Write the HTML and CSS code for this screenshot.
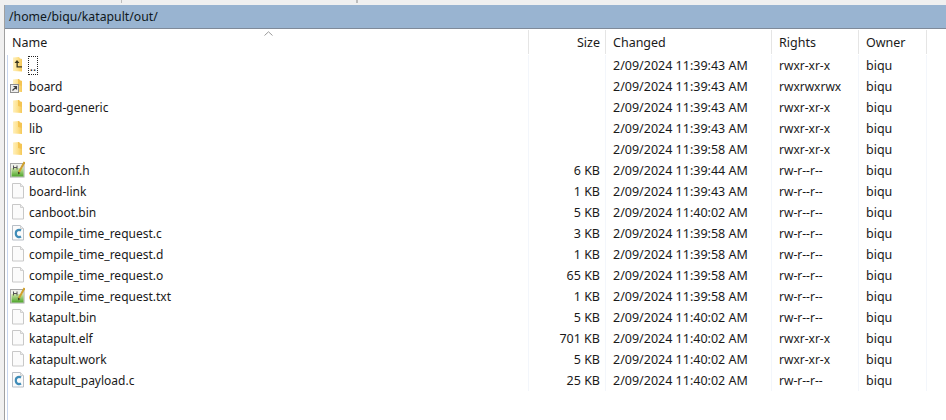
FILE: index.html
```html
<!DOCTYPE html>
<html lang="en">
<head>
<meta charset="utf-8">
<title>/home/biqu/katapult/out/</title>
<link rel="stylesheet" href="styles.css">
</head>
<body>
<svg class="defs" width="0" height="0" aria-hidden="true">
  <defs>
    <linearGradient id="fold" x1="0" x2="1" y1="0" y2="0">
      <stop offset="0" stop-color="#fff0bd"/>
      <stop offset="0.55" stop-color="#fde08a"/>
      <stop offset="1" stop-color="#f5c858"/>
    </linearGradient>
    <linearGradient id="green" x1="0" x2="0" y1="0" y2="1">
      <stop offset="0" stop-color="#cfe6a8"/>
      <stop offset="1" stop-color="#4ca52a"/>
    </linearGradient>
    <symbol id="folder" viewBox="0 0 16 19">
      <path d="M4 2.500L10 2l1 1.500L13 4v11l-9-.5z" fill="url(#fold)"/>
      <path d="M9 2l1 0 1 1.500L13 4v5l-4-1z" fill="#f4c453"/>
    </symbol>
    <symbol id="up" viewBox="0 0 16 19">
      <path d="M4 1.500L10 1l1 1.500 2 .5v12.500l-9-.5z" fill="url(#fold)"/>
      <path d="M8 4L5.500 7H7.500V11.500H13V10.300H8.800V7H10.500z" fill="#3d3820"/>
    </symbol>
    <symbol id="link" viewBox="0 0 16 19">
      <path d="M4 2.500L10 2l1 1.500L13 4v11l-9-.5z" fill="url(#fold)"/>
      <path d="M9 2l1 0 1 1.500L13 4v5l-4-1z" fill="#f4c453"/>
      <rect x="1.500" y="7.500" width="8" height="8" fill="#eee" stroke="#8d8d8d"/>
      <path d="M3.500 13.500L7 10M4.500 9.500H7.500V12.500" fill="none" stroke="#404040" stroke-width="1.200"/>
    </symbol>
    <symbol id="file" viewBox="0 0 16 19">
      <path d="M3.500 1.500h8l3 3v11.500h-11z" fill="#fbfbfb" stroke="#c8c8c8"/>
      <path d="M11.500 1.500v3h3" fill="#ececec" stroke="#d0d0d0"/>
    </symbol>
    <symbol id="cfile" viewBox="0 0 16 19">
      <path d="M3.500 1.500h8l3 3v11.500h-11z" fill="#fbfbfb" stroke="#b8bec6"/>
      <path d="M11.500 1.500v3h3" fill="#ececec" stroke="#d0d0d0"/>
      <path d="M12 6.500C10.500 5.500 6.800 5.500 6.800 9.500s3.700 4 5.200 3" fill="none" stroke="#3f8cb8" stroke-width="2.200"/>
    </symbol>
    <symbol id="text" viewBox="0 0 16 19">
      <rect x="1.500" y="2.500" width="13.500" height="13.500" fill="#eef0ea" stroke="#a8a8a8"/>
      <rect x="2.500" y="7" width="12" height="8.500" fill="url(#green)"/>
      <path d="M4.500 4.500v4M8 4.500v4M4.500 6.500H8" stroke="#555" fill="none"/>
      <path d="M10 11L15.500 1" stroke="#cfa02e" stroke-width="2" fill="none"/>
      <path d="M8.800 10.500l.5 3 2-1.500z" fill="#46401f"/>
    </symbol>
  </defs>
</svg>
<div class="strip"><span class="tick"></span><span class="tick tick-wide"></span></div>
<main class="panel">
  <div class="path">/home/biqu/katapult/out/</div>
  <div class="row head">
    <div class="c name">Name<span class="sort"><svg width="9" height="5" viewBox="0 0 9 5"><path d="M.5 4.500L4.500.8l4 3.700" fill="none" stroke="#9a9a9a"/></svg></span></div>
    <div class="c size">Size</div>
    <div class="c changed">Changed</div>
    <div class="c rights">Rights</div>
    <div class="c owner">Owner</div>
    <div class="c rest"></div>
  </div>
  <div class="list">
    <div class="row"><div class="c name"><svg class="ico"><use href="#up"/></svg><span class="focus">..</span></div><div class="c size"></div><div class="c changed">2/09/2024 11:39:43 AM</div><div class="c rights">rwxr-xr-x</div><div class="c owner">biqu</div><div class="c rest"></div></div>
    <div class="row"><div class="c name"><svg class="ico"><use href="#link"/></svg>board</div><div class="c size"></div><div class="c changed">2/09/2024 11:39:43 AM</div><div class="c rights">rwxrwxrwx</div><div class="c owner">biqu</div><div class="c rest"></div></div>
    <div class="row"><div class="c name"><svg class="ico"><use href="#folder"/></svg>board-generic</div><div class="c size"></div><div class="c changed">2/09/2024 11:39:43 AM</div><div class="c rights">rwxr-xr-x</div><div class="c owner">biqu</div><div class="c rest"></div></div>
    <div class="row"><div class="c name"><svg class="ico"><use href="#folder"/></svg>lib</div><div class="c size"></div><div class="c changed">2/09/2024 11:39:43 AM</div><div class="c rights">rwxr-xr-x</div><div class="c owner">biqu</div><div class="c rest"></div></div>
    <div class="row"><div class="c name"><svg class="ico"><use href="#folder"/></svg>src</div><div class="c size"></div><div class="c changed">2/09/2024 11:39:58 AM</div><div class="c rights">rwxr-xr-x</div><div class="c owner">biqu</div><div class="c rest"></div></div>
    <div class="row"><div class="c name"><svg class="ico"><use href="#text"/></svg>autoconf.h</div><div class="c size">6 KB</div><div class="c changed">2/09/2024 11:39:44 AM</div><div class="c rights">rw-r--r--</div><div class="c owner">biqu</div><div class="c rest"></div></div>
    <div class="row"><div class="c name"><svg class="ico"><use href="#file"/></svg>board-link</div><div class="c size">1 KB</div><div class="c changed">2/09/2024 11:39:43 AM</div><div class="c rights">rw-r--r--</div><div class="c owner">biqu</div><div class="c rest"></div></div>
    <div class="row"><div class="c name"><svg class="ico"><use href="#file"/></svg>canboot.bin</div><div class="c size">5 KB</div><div class="c changed">2/09/2024 11:40:02 AM</div><div class="c rights">rw-r--r--</div><div class="c owner">biqu</div><div class="c rest"></div></div>
    <div class="row"><div class="c name"><svg class="ico"><use href="#cfile"/></svg>compile_time_request.c</div><div class="c size">3 KB</div><div class="c changed">2/09/2024 11:39:58 AM</div><div class="c rights">rw-r--r--</div><div class="c owner">biqu</div><div class="c rest"></div></div>
    <div class="row"><div class="c name"><svg class="ico"><use href="#file"/></svg>compile_time_request.d</div><div class="c size">1 KB</div><div class="c changed">2/09/2024 11:39:58 AM</div><div class="c rights">rw-r--r--</div><div class="c owner">biqu</div><div class="c rest"></div></div>
    <div class="row"><div class="c name"><svg class="ico"><use href="#file"/></svg>compile_time_request.o</div><div class="c size">65 KB</div><div class="c changed">2/09/2024 11:39:58 AM</div><div class="c rights">rw-r--r--</div><div class="c owner">biqu</div><div class="c rest"></div></div>
    <div class="row"><div class="c name"><svg class="ico"><use href="#text"/></svg>compile_time_request.txt</div><div class="c size">1 KB</div><div class="c changed">2/09/2024 11:39:58 AM</div><div class="c rights">rw-r--r--</div><div class="c owner">biqu</div><div class="c rest"></div></div>
    <div class="row"><div class="c name"><svg class="ico"><use href="#file"/></svg>katapult.bin</div><div class="c size">5 KB</div><div class="c changed">2/09/2024 11:40:02 AM</div><div class="c rights">rw-r--r--</div><div class="c owner">biqu</div><div class="c rest"></div></div>
    <div class="row"><div class="c name"><svg class="ico"><use href="#file"/></svg>katapult.elf</div><div class="c size">701 KB</div><div class="c changed">2/09/2024 11:40:02 AM</div><div class="c rights">rwxr-xr-x</div><div class="c owner">biqu</div><div class="c rest"></div></div>
    <div class="row"><div class="c name"><svg class="ico"><use href="#file"/></svg>katapult.work</div><div class="c size">5 KB</div><div class="c changed">2/09/2024 11:40:02 AM</div><div class="c rights">rwxr-xr-x</div><div class="c owner">biqu</div><div class="c rest"></div></div>
    <div class="row"><div class="c name"><svg class="ico"><use href="#cfile"/></svg>katapult_payload.c</div><div class="c size">25 KB</div><div class="c changed">2/09/2024 11:40:02 AM</div><div class="c rights">rw-r--r--</div><div class="c owner">biqu</div><div class="c rest"></div></div>
  </div>
</main>
</body>
</html>
```
FILE: styles.css
```css
html, body {
  margin: 0;
  height: 100%;
  overflow: hidden;
}
body {
  width: 946px;
  height: 420px;
  background: #f0f0f0;
  font-family: "Noto Sans", "Open Sans", sans-serif;
  font-size: 12.5px;
  color: #1a1a1a;
}
.defs { position: absolute; }
.strip {
  height: 5px;
  display: flex;
}
.tick {
  margin-left: 121px;
  width: 1px;
  height: 3px;
  background: #bdbdbd;
}
.tick-wide {
  margin-left: 234px;
  width: 2px;
}
.panel {
  margin-left: 4px;
  height: 415px;
  border-left: 1px solid #a0a0a0;
  background: #fff;
}
.path {
  height: 23px;
  line-height: 24px;
  padding-left: 4px;
  background: #99b4d1;
  border-bottom: 1px solid #7f8a99;
  color: #101820;
  font-size: 12.25px;
}
.row {
  display: grid;
  grid-template-columns: 524px 77px 166px 87px 68px 1fr;
  height: 21px;
  line-height: 21px;
}
.head {
  height: 26px;
}
.c {
  padding-left: 7px;
  white-space: nowrap;
  border-right: 1px solid #f3f6fb;
}
.head .c {
  height: 24px;
  margin-top: 1px;
  line-height: 26px;
  border-right-color: #e5e5e5;
}
.name {
  position: relative;
}
.list .name {
  display: flex;
  align-items: center;
  padding-left: 4px;
  font-size: 12px;
}
.list .rights { font-size: 12px; }
.list { position: relative; }
.list::before {
  content: "";
  position: absolute;
  left: 2px;
  top: 0;
  width: 1px;
  height: 366px;
  background: #c8d6ee;
}
.size {
  text-align: right;
  padding: 0 5px 0 0;
}
.rest { border-right: 0; }
.ico {
  width: 16px;
  height: 19px;
  flex: none;
  margin-right: 4px;
}
.sort {
  position: absolute;
  left: 259px;
  top: 1px;
  line-height: 0;
}
.focus {
  width: 10px;
  height: 19px;
  box-sizing: border-box;
  margin-left: -1px;
  border: 1px dotted #222;
  line-height: 20px;
  text-align: center;
}
```
